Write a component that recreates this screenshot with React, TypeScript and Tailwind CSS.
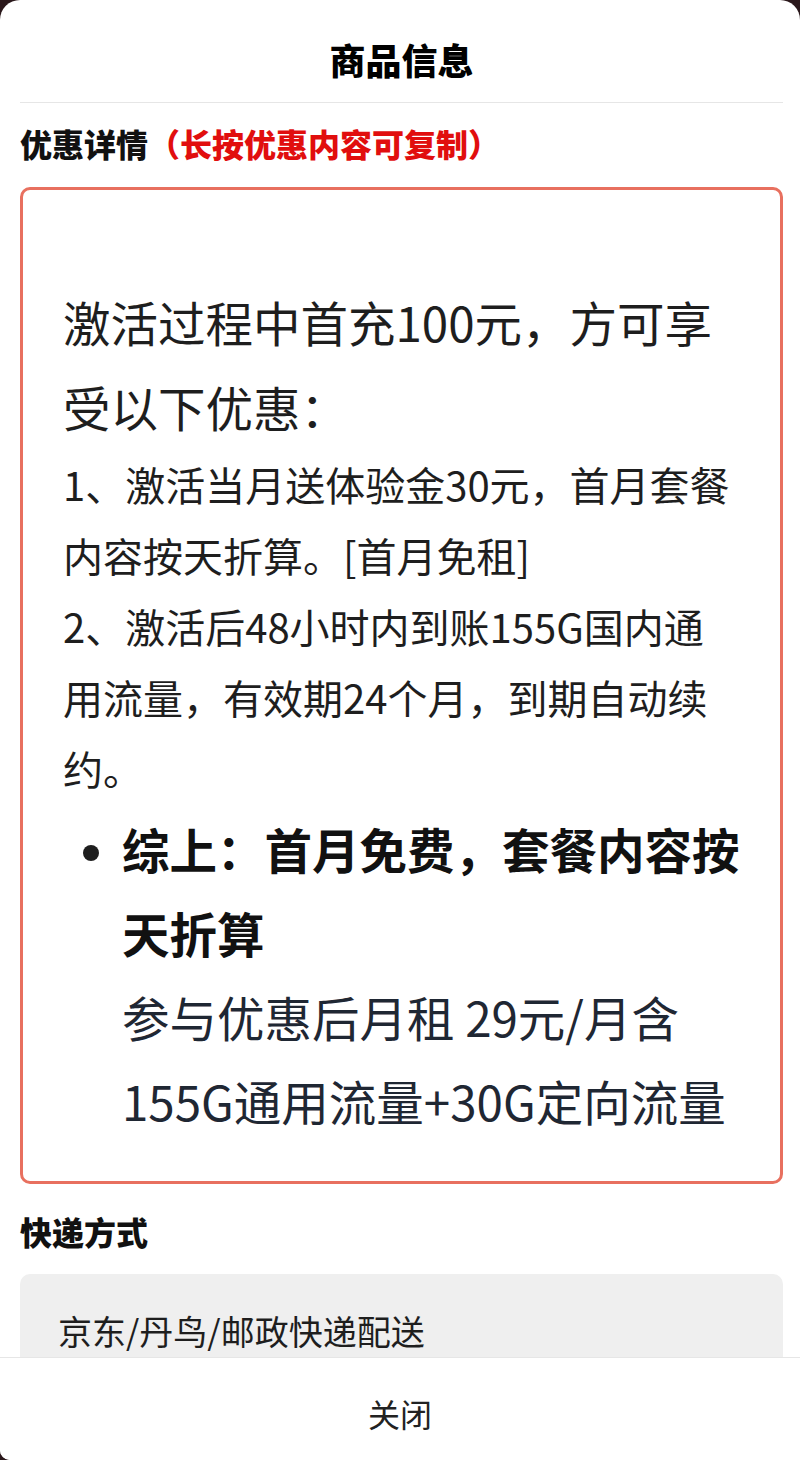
import React from 'react';

const cjk = { fontFamily: '"Noto Sans CJK SC", "Noto Sans", sans-serif' };

export default function App() {
  return (
    <div className="relative w-[800px] h-[1460px] overflow-hidden bg-[#2a181b]" style={cjk}>
      <div className="h-full bg-white rounded-t-[20px] rounded-bl-[10px]">
        {/* Header */}
        <div className="h-[103px] ml-[20px] mr-[17px] pt-[16px] flex items-center justify-center border-b border-[#e6e6e6]">
          <h1 className="text-[36px] leading-[44px] font-black text-black">商品信息</h1>
        </div>

        {/* Discount details */}
        <div className="ml-[20px] mr-[17px] mt-[20px] text-[32px] leading-[40px] font-black text-[#111]">
          优惠详情<span className="text-[#e10e0e]">（长按优惠内容可复制）</span>
        </div>

        <div className="ml-[20px] mr-[17px] mt-[24px] h-[997px] border-[3px] border-[#e8705f] rounded-[10px] pl-[40px] pr-[10px] pt-[89px] text-[#1e1e1e] whitespace-nowrap">
          <p className="text-[47.5px] leading-[85px]">
            激活过程中首充100元，方可享
            <br />
            受以下优惠：
          </p>
          <p className="text-[40px] leading-[71px]">
            1、激活当月送体验金30元，首月套餐
            <br />
            内容按天折算。[首月免租]
          </p>
          <p className="text-[40px] leading-[71px]">
            2、激活后48小时内到账155G国内通
            <br />
            用流量，有效期24个月，到期自动续
            <br />
            约。
          </p>
          <ul className="mt-[3px] pl-[59px] list-disc text-[47.5px] leading-[84px] marker:text-[42px]">
            <li>
              <strong className="font-bold text-[#111]">
                综上：首月免费，套餐内容按
                <br />
                天折算
              </strong>
              <p className="text-[#1f2733]">
                参与优惠后月租 29元/月含
                <br />
                155G通用流量+30G定向流量
              </p>
            </li>
          </ul>
        </div>

        {/* Delivery */}
        <div className="ml-[20px] mt-[27px] text-[32px] leading-[40px] font-black text-[#111]">快递方式</div>
        <div className="ml-[20px] mr-[17px] mt-[23px] h-[200px] bg-[#efefef] rounded-[10px] pl-[38px] pt-[33px]">
          <p className="text-[34px] leading-[48px] text-[#1e1e1e]">京东/丹鸟/邮政快递配送</p>
        </div>
      </div>

      {/* Footer */}
      <div className="absolute bottom-0 left-0 right-0 h-[103px] bg-white border-t border-[#e6e6e6] rounded-bl-[10px] flex items-center justify-center pt-[8px]">
        <span className="text-[32px] leading-[40px] text-[#222]">关闭</span>
      </div>
    </div>
  );
}
